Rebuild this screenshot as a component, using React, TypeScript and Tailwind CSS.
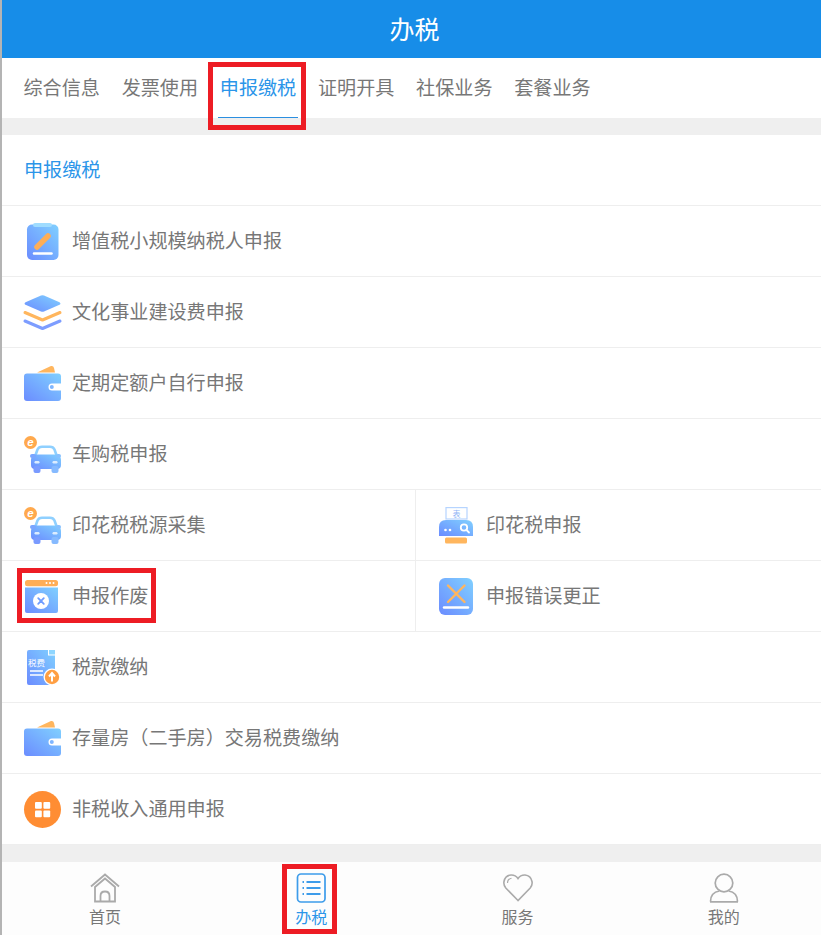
import type { ReactNode } from "react";

const cjk = "font-['Noto_Sans_CJK_SC','Noto_Sans',sans-serif]";

function Grad({ id }: { id: string }) {
  return (
    <defs>
      <linearGradient id={id} x1="0" y1="1" x2="1" y2="0">
        <stop offset="0" stopColor="#6b8cff" />
        <stop offset="1" stopColor="#80d0ff" />
      </linearGradient>
    </defs>
  );
}

function Icon({ children }: { children: ReactNode }) {
  return (
    <svg viewBox="0 0 37 37" className="w-[37px] h-[37px] shrink-0 overflow-visible">
      {children}
    </svg>
  );
}

function ClipboardIcon() {
  return (
    <Icon>
      <Grad id="clip" />
      <rect x="3" y="1.5" width="31.5" height="35.5" rx="5" fill="url(#clip)" />
      <rect x="9" y="0" width="19" height="4" rx="2" fill="#9fdcff" />
      <path d="M13 24 L24 13" stroke="#ffae57" strokeWidth="5.5" strokeLinecap="round" />
      <path d="M10 30.5 H27.5" stroke="#fff" strokeWidth="2.5" strokeLinecap="round" />
    </Icon>
  );
}

function LayersIcon() {
  return (
    <Icon>
      <Grad id="layers" />
      <path d="M17 1.6 Q18.5 1 20 1.6 L35.5 8.2 Q37.4 9.5 35.5 10.8 L20 17.4 Q18.5 18 17 17.4 L1.5 10.8 Q-0.4 9.5 1.5 8.2 Z" fill="url(#layers)" />
      <path d="M1 18.5 L18.5 26 L36 18.5" fill="none" stroke="#ffb65e" strokeWidth="3" strokeLinecap="round" strokeLinejoin="round" />
      <path d="M1 27 L18.5 34.5 L36 27" fill="none" stroke="#7d9dff" strokeWidth="3" strokeLinecap="round" strokeLinejoin="round" />
    </Icon>
  );
}

function WalletIcon({ id }: { id: string }) {
  return (
    <Icon>
      <Grad id={id} />
      <path d="M13 7.5 L27 1 Q29.5 0.5 30 3 L31 7.5 Z" fill="#ffb65e" />
      <rect x="0" y="8.5" width="37" height="27.5" rx="3" fill={`url(#${id})`} />
      <path d="M37 18.5 H28 Q24.5 18.5 24.5 22 Q24.5 25.5 28 25.5 H37 Z" fill="#fff" />
      <circle cx="27.8" cy="22" r="2" fill="#7fb6ff" />
    </Icon>
  );
}

function CarIcon({ id }: { id: string }) {
  return (
    <Icon>
      <Grad id={id} />
      <path d="M11 20.5 L13.5 13.5 Q14.8 10.8 18 10.8 H26 Q29.2 10.8 30.5 13.5 L33 20.5" fill="none" stroke="#8fd0ff" strokeWidth="2.6" />
      <path d="M11 18.5 H33 Q37 20 37 24 V29 Q37 33 33 33 H11 Q7 33 7 29 V24 Q7 20 11 18.5 Z" fill={`url(#${id})`} />
      <rect x="6" y="18" width="6" height="4" rx="2" fill="#7aa6ff" />
      <rect x="32" y="18" width="5" height="4" rx="2" fill="#86c0ff" />
      <rect x="9.5" y="30" width="7" height="7" rx="2" fill="#7a9bff" />
      <rect x="27.5" y="30" width="7" height="7" rx="2" fill="#86baff" />
      <rect x="10.5" y="25" width="5" height="2.4" rx="1.2" fill="#dcecff" />
      <rect x="28.5" y="25" width="5" height="2.4" rx="1.2" fill="#dcecff" />
      <circle cx="6.5" cy="6.5" r="6.5" fill="#ffa94d" />
      <text x="6.5" y="10.4" textAnchor="middle" fontSize="11.5" fontStyle="italic" fontWeight="700" fill="#fff" fontFamily="Liberation Sans, sans-serif">e</text>
    </Icon>
  );
}

function DocCancelIcon() {
  return (
    <Icon>
      <Grad id="cancel" />
      <rect x="1" y="2" width="33" height="6.2" rx="2.5" fill="#ffae57" />
      <circle cx="22.5" cy="5" r="1" fill="#fff" />
      <circle cx="26" cy="5" r="1" fill="#fff" />
      <circle cx="29.5" cy="5" r="1" fill="#fff" />
      <path d="M1 9.5 H34 V33 Q34 35 32 35 H3 Q1 35 1 33 Z" fill="url(#cancel)" />
      <circle cx="17" cy="23" r="8" fill="#fff" />
      <path d="M14.2 20.2 L19.8 25.8 M19.8 20.2 L14.2 25.8" stroke="#6f9cff" strokeWidth="1.8" strokeLinecap="round" />
    </Icon>
  );
}

function PrinterIcon() {
  return (
    <Icon>
      <Grad id="printer" />
      <rect x="7" y="0.6" width="21" height="11.4" fill="#fff" stroke="#b6d4ff" strokeWidth="1.2" />
      <text x="17.5" y="10" textAnchor="middle" fontSize="8" fill="#8fb4f5" fontFamily="Noto Sans CJK SC, sans-serif">表</text>
      <path d="M7 13 H27 Q34 13 34 20 V29 H0 V20 Q0 13 7 13 Z" fill="url(#printer)" />
      <circle cx="6.5" cy="23" r="1.3" fill="#fff" />
      <circle cx="11" cy="23" r="1.3" fill="#fff" />
      <circle cx="25" cy="20.5" r="3.2" fill="none" stroke="#fff" strokeWidth="1.8" />
      <path d="M27.5 23 L30 25.5" stroke="#fff" strokeWidth="1.8" strokeLinecap="round" />
      <rect x="6" y="30.5" width="22" height="6" rx="1.5" fill="#ffb65e" />
    </Icon>
  );
}

function CorrectIcon() {
  return (
    <Icon>
      <Grad id="correct" />
      <rect x="0" y="0" width="34" height="37" rx="6" fill="url(#correct)" />
      <path d="M9 7.5 L25.5 24 M25.5 7.5 L9 24" stroke="#ffb65e" strokeWidth="2.4" strokeLinecap="round" />
      <path d="M5 29.5 H29" stroke="#fff" strokeWidth="2.4" strokeLinecap="round" />
    </Icon>
  );
}

function TaxPayIcon() {
  return (
    <Icon>
      <Grad id="taxpay" />
      <path d="M5 1 H24 V6.5 H31 V34 Q31 36 29 36 H5 Q3 36 3 34 V3 Q3 1 5 1 Z" fill="url(#taxpay)" />
      <path d="M25 1 L31 1 L31 5.5 L25 5.5 Z" fill="#8fd6ff" />
      <text x="4" y="17" fontSize="8.5" fill="#fff" fontFamily="Noto Sans CJK SC, sans-serif">税费</text>
      <path d="M6 22 H19 M6 26 H19" stroke="#fff" strokeWidth="1.4" />
      <circle cx="28" cy="28" r="8.5" fill="#fff" />
      <circle cx="28" cy="28" r="7.2" fill="#ff9f43" />
      <path d="M28 32.5 V25 M25 27.5 L28 24 L31 27.5" fill="none" stroke="#fff" strokeWidth="2" />
    </Icon>
  );
}

function GridCircleIcon() {
  return (
    <Icon>
      <circle cx="18.5" cy="18.5" r="18.5" fill="#ff8d33" />
      <rect x="11" y="11" width="6.8" height="6.8" rx="1" fill="#fff" />
      <rect x="19.4" y="11" width="6.8" height="6.8" rx="1" fill="#fff" />
      <rect x="11" y="19.4" width="6.8" height="6.8" rx="1" fill="#fff" />
      <rect x="19.4" y="19.4" width="6.8" height="6.8" rx="1" fill="#fff" />
    </Icon>
  );
}

function HomeTabIcon() {
  return (
    <svg viewBox="0 0 30 30" className="w-[30px] h-[30px]" fill="none" stroke="#aaa" strokeWidth="1.8">
      <path d="M1 13.5 L15 1.5 L29 13.5" />
      <path d="M5 14 L15 5.5 L25 14 V28.5 H5 Z" />
      <path d="M10.5 28.5 V23 Q10.5 18.5 15 18.5 Q19.5 18.5 19.5 23 V28.5" />
    </svg>
  );
}

function ListTabIcon() {
  return (
    <svg viewBox="0 0 30 30" className="w-[30px] h-[30px]" fill="none" stroke="#3d9cea" strokeWidth="1.7">
      <rect x="1.5" y="1" width="27.5" height="28" rx="3.5" />
      <path d="M10.5 9 H24.5 M10.5 15 H24.5 M10.5 21 H24.5" strokeWidth="2" />
      <path d="M6.5 9 H8 M6.5 15 H8 M6.5 21 H8" strokeWidth="2" />
    </svg>
  );
}

function HeartTabIcon() {
  return (
    <svg viewBox="0 0 30 30" className="w-[30px] h-[30px]" fill="none" stroke="#aaa" strokeWidth="1.6">
      <path d="M15 27.5 L2.8 15 Q0.3 12 1 8.5 Q2.2 2.5 8 2 Q12.5 1.8 15 5.5 Q17.5 1.8 22 2 Q27.8 2.5 29 8.5 Q29.7 12 27.2 15 Z" />
      <path d="M4.5 10 Q4.5 6 8.5 5.2" strokeWidth="1.1" />
    </svg>
  );
}

function PersonTabIcon() {
  return (
    <svg viewBox="0 0 30 30" className="w-[30px] h-[30px]" fill="none" stroke="#aaa" strokeWidth="1.7">
      <circle cx="15" cy="10" r="8.8" />
      <path d="M1.5 28.5 Q1.5 19.5 10.5 18 M28.5 28.5 Q28.5 19.5 19.5 18 M1 28.8 H29" />
    </svg>
  );
}

function Row({ icon, label }: { icon: ReactNode; label: string }) {
  return (
    <div className="flex items-center gap-[11px] h-[71px] pl-[22px] border-b border-[#eeeeee] bg-white">
      {icon}
      <CellText>{label}</CellText>
    </div>
  );
}

function SplitRow({ left, right }: { left: ReactNode; right: ReactNode }) {
  return (
    <div className="grid grid-cols-[414px_1fr] h-[71px] border-b border-[#eeeeee] bg-white">
      <div className="flex items-center gap-[11px] pl-[22px] border-r border-[#eeeeee]">{left}</div>
      <div className="flex items-center gap-[10px] pl-[23px]">{right}</div>
    </div>
  );
}

function CellText({ children }: { children: ReactNode }) {
  return <span className="text-[19.1px] leading-none pb-[1px] text-[#777777]">{children}</span>;
}

const tabs = ["综合信息", "发票使用", "申报缴税", "证明开具", "社保业务", "套餐业务"];

const bottomTabs = [
  { label: "首页", icon: <HomeTabIcon />, active: false },
  { label: "办税", icon: <ListTabIcon />, active: true },
  { label: "服务", icon: <HeartTabIcon />, active: false },
  { label: "我的", icon: <PersonTabIcon />, active: false },
];

export default function App() {
  return (
    <div className={`relative h-[935px] w-[821px] overflow-hidden border-l-2 border-[#b4b4b4] bg-[#efefef] flex flex-col ${cjk}`}>
      <header className="h-[58px] shrink-0 bg-[#178de8] flex items-center justify-center">
        <h1 className="text-[25px] leading-none text-white pl-[6px] pb-[1px]">办税</h1>
      </header>

      <nav className="h-[60px] shrink-0 bg-white flex pl-[10.6px]">
        {tabs.map((tab) => (
          <div key={tab} className="relative flex items-center px-[10.9px]">
            <span className={`text-[19.1px] leading-none pb-[1px] ${tab === "申报缴税" ? "text-[#2b95e9]" : "text-[#777777]"}`}>
              {tab}
            </span>
            {tab === "申报缴税" && (
              <div className="absolute left-[9.5px] right-[9.5px] bottom-0 h-px bg-[#2b8fe0]" />
            )}
          </div>
        ))}
      </nav>

      <div className="mt-[17px] bg-white">
        <div className="flex items-center h-[71px] pl-[22px] border-b border-[#eeeeee]">
          <span className="text-[19.1px] leading-none pb-[1px] text-[#2b95e9]">申报缴税</span>
        </div>
        <Row icon={<ClipboardIcon />} label="增值税小规模纳税人申报" />
        <Row icon={<LayersIcon />} label="文化事业建设费申报" />
        <Row icon={<WalletIcon id="wallet1" />} label="定期定额户自行申报" />
        <Row icon={<CarIcon id="car1" />} label="车购税申报" />
        <SplitRow
          left={<><CarIcon id="car2" /><CellText>印花税税源采集</CellText></>}
          right={<><PrinterIcon /><CellText>印花税申报</CellText></>}
        />
        <SplitRow
          left={<><DocCancelIcon /><CellText>申报作废</CellText></>}
          right={<><CorrectIcon /><CellText>申报错误更正</CellText></>}
        />
        <Row icon={<TaxPayIcon />} label="税款缴纳" />
        <Row icon={<WalletIcon id="wallet2" />} label="存量房（二手房）交易税费缴纳" />
        <Row icon={<GridCircleIcon />} label="非税收入通用申报" />
      </div>

      <footer className="absolute left-0 bottom-0 h-[73px] w-[825px] bg-[#fdfdfd] grid grid-cols-4">
        {bottomTabs.map((tab) => (
          <div key={tab.label} className="flex flex-col items-center pt-[11px]">
            {tab.icon}
            <span className={`mt-[3px] text-[16px] leading-[20px] ${tab.active ? "text-[#2b95e9]" : "text-[#777777]"}`}>
              {tab.label}
            </span>
          </div>
        ))}
      </footer>

      <div className="absolute left-[206px] top-[62px] w-[98px] h-[68px] border-[5px] border-[#ed1c24]" />
      <div className="absolute left-[15px] top-[568px] w-[139px] h-[55px] border-[5px] border-[#ed1c24]" />
      <div className="absolute left-[280px] top-[864px] w-[55px] h-[70px] border-[5px] border-[#ed1c24]" />
      <div className="absolute -left-[2px] top-0 w-[2px] h-[58px] bg-white" />
      <div className="absolute -left-[2px] top-[15px] w-[2px] h-[10px] bg-[#999999]" />
    </div>
  );
}
